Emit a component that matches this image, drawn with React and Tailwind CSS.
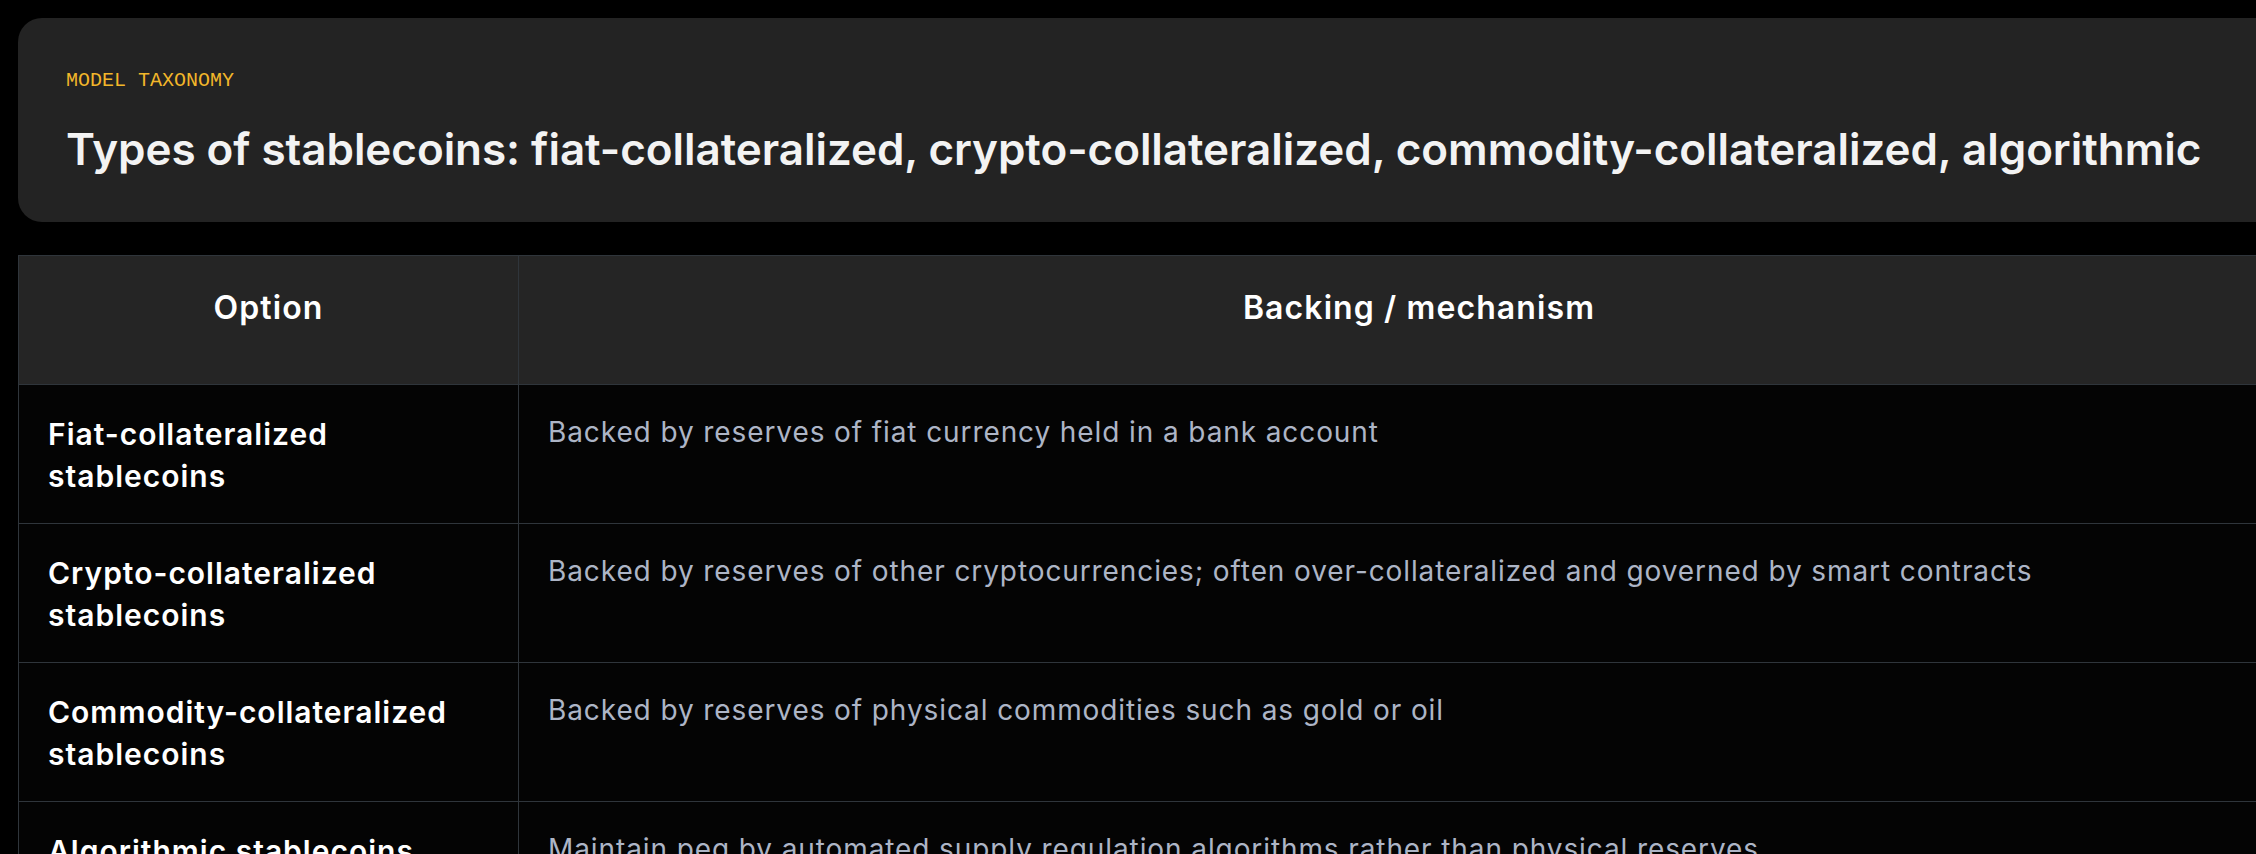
import React from 'react';

const rows = [
  {
    option: 'Fiat-collateralized stablecoins',
    mechanism: 'Backed by reserves of fiat currency held in a bank account',
  },
  {
    option: 'Crypto-collateralized stablecoins',
    mechanism:
      'Backed by reserves of other cryptocurrencies; often over-collateralized and governed by smart contracts',
  },
  {
    option: 'Commodity-collateralized stablecoins',
    mechanism: 'Backed by reserves of physical commodities such as gold or oil',
  },
  {
    option: 'Algorithmic stablecoins',
    mechanism: 'Maintain peg by automated supply regulation algorithms rather than physical reserves',
  },
];

export default function App() {
  return (
    <div className="w-[2256px] h-[854px] overflow-hidden bg-black font-['Inter',sans-serif]">
      <div className="w-[2338px] px-[18px] pt-[18px] flex flex-col gap-[33px]">
        {/* Title card */}
        <section className="bg-[#232323] rounded-3xl p-12 flex flex-col gap-7">
          <div className="font-['Liberation_Mono',monospace] text-[20px] leading-[30px] uppercase text-[#f2b62a]">
            Model taxonomy
          </div>
          <h1 className="text-[44px] leading-[50px] tracking-[-0.05px] font-semibold text-[#f3f3f3]">
            Types of stablecoins: fiat-collateralized, crypto-collateralized, commodity-collateralized, algorithmic
          </h1>
        </section>

        {/* Comparison table */}
        <table className="w-full border-collapse border border-[#2f353b] text-left">
          <thead>
            <tr className="bg-[#252525] h-[129px]">
              <th className="w-[500px] border border-[#2f353b] px-7 pt-7 align-top text-center text-[32px] leading-[48px] tracking-[1.1px] font-semibold text-white">
                Option
              </th>
              <th className="border border-[#2f353b] px-7 pt-7 align-top text-center text-[32px] leading-[48px] tracking-[1.1px] font-semibold text-white">
                Backing / mechanism
              </th>
            </tr>
          </thead>
          <tbody className="bg-[#040404]">
            {rows.map((row) => (
              <tr key={row.option} className="h-[139px]">
                <td className="border border-[#2f353b] pl-[29px] pr-7 pt-7 pb-6 align-top text-[30px] leading-[42px] tracking-[1px] font-semibold text-white">
                  {row.option}
                </td>
                <td className="border border-[#2f353b] pl-[29px] pr-7 pt-[26px] pb-6 align-top text-[28px] leading-[42px] tracking-[0.9px] text-[#adb5c6]">
                  {row.mechanism}
                </td>
              </tr>
            ))}
          </tbody>
        </table>
      </div>
    </div>
  );
}
